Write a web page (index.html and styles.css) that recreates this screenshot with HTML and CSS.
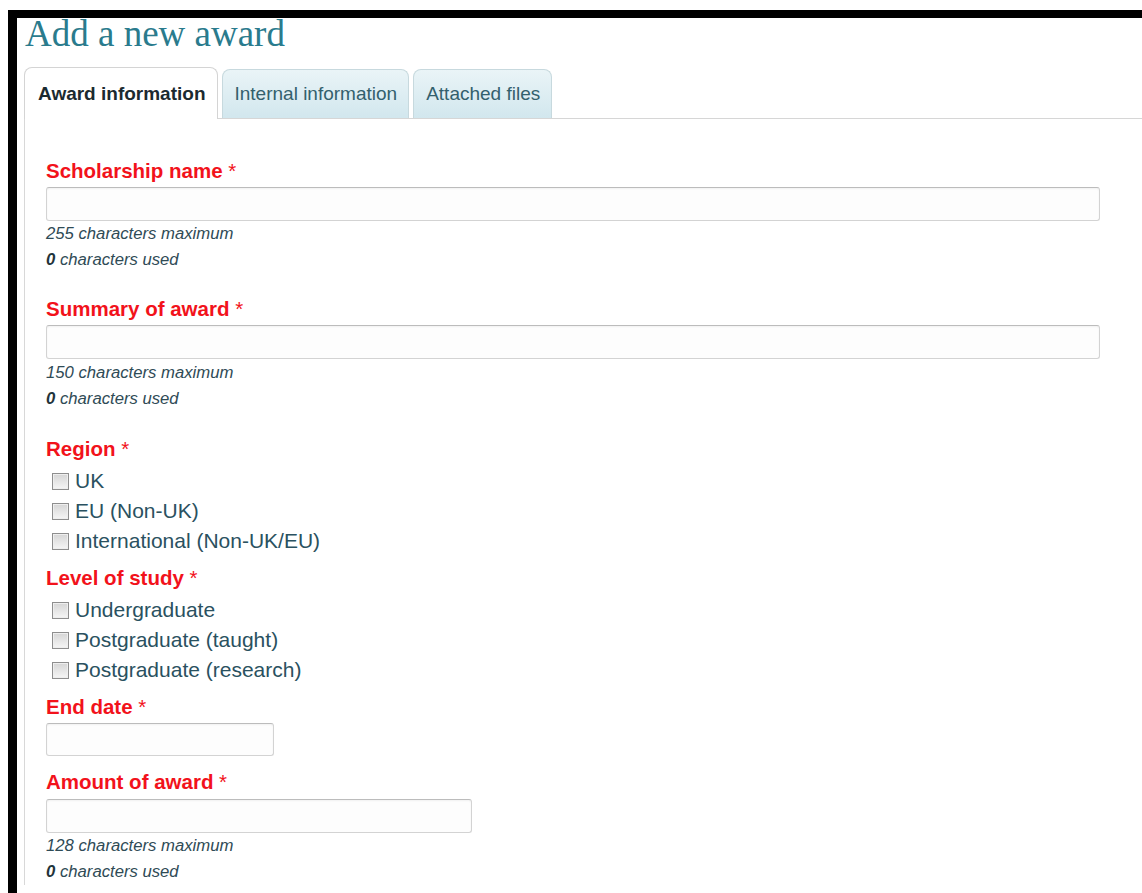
FILE: index.html
```html
<!DOCTYPE html>
<html lang="en">
<head>
<meta charset="utf-8">
<title>Add a new award</title>
<link rel="stylesheet" href="styles.css">
</head>
<body>
<div class="frame">
  <h1 class="page-title">Add a new award</h1>

  <div class="tabbar">
    <div class="tab tab--active">Award information</div>
    <div class="tab">Internal information</div>
    <div class="tab">Attached files</div>
  </div>

  <form class="panel">
    <div class="field field--counted">
      <label class="field-label" for="name">Scholarship name <span class="req">*</span></label>
      <input class="text-input text-input--wide" id="name" type="text">
      <div class="hint">255 characters maximum</div>
      <div class="hint"><b>0</b> characters used</div>
    </div>

    <div class="field field--counted field--summary">
      <label class="field-label" for="summary">Summary of award <span class="req">*</span></label>
      <input class="text-input text-input--wide" id="summary" type="text">
      <div class="hint">150 characters maximum</div>
      <div class="hint"><b>0</b> characters used</div>
    </div>

    <div class="field field--group">
      <div class="field-label field-label--group">Region <span class="req">*</span></div>
      <label class="check"><input type="checkbox"><span>UK</span></label>
      <label class="check"><input type="checkbox"><span>EU (Non-UK)</span></label>
      <label class="check"><input type="checkbox"><span>International (Non-UK/EU)</span></label>
    </div>

    <div class="field field--group">
      <div class="field-label field-label--group">Level of study <span class="req">*</span></div>
      <label class="check"><input type="checkbox"><span>Undergraduate</span></label>
      <label class="check"><input type="checkbox"><span>Postgraduate (taught)</span></label>
      <label class="check"><input type="checkbox"><span>Postgraduate (research)</span></label>
    </div>

    <div class="field field--date">
      <label class="field-label" for="end">End date <span class="req">*</span></label>
      <input class="text-input text-input--date" id="end" type="text">
    </div>

    <div class="field">
      <label class="field-label field-label--amount" for="amount">Amount of award <span class="req">*</span></label>
      <input class="text-input text-input--mid" id="amount" type="text">
      <div class="hint">128 characters maximum</div>
      <div class="hint"><b>0</b> characters used</div>
    </div>
  </form>
</div>
</body>
</html>
```

FILE: styles.css
```css
html, body {
  margin: 0;
  padding: 0;
  background: #fff;
}

body {
  font-family: "Liberation Sans", Arial, sans-serif;
  overflow: hidden;
}

/* outer dark frame */
.frame {
  margin: 10px 0 0 8px;
  border-top: 8px solid #000;
  border-left: 9px solid #000;
  padding-left: 7px;
  min-height: 900px;
}

.page-title {
  margin: 0 0 17px 1px;
  font-family: "Liberation Serif", Georgia, serif;
  font-weight: normal;
  font-size: 37px;
  line-height: 32px;
  color: #2a7b8d;
}

/* tabs */
.tabbar {
  display: flex;
  align-items: flex-end;
  gap: 4px;
  border-bottom: 1px solid #d6d6d6;
}

.tab {
  height: 48px;
  display: flex;
  align-items: center;
  padding: 0 11px 0 12px;
  font-size: 19px;
  color: #33606d;
  border: 1px solid #c7d9de;
  border-bottom: none;
  border-radius: 8px 8px 0 0;
  background: linear-gradient(#eaf4f7, #d2e7ee);
}

.tab--active {
  height: 51px;
  margin-bottom: -1px;
  padding: 0 11px 0 13px;
  font-weight: bold;
  color: #1b2a30;
  background: #fff;
  border-color: #d4d4d4;
}

/* form panel */
.panel {
  border-left: 1px solid #d8d8d8;
  padding: 40px 0 0 21px;
}

.field--counted {
  margin-bottom: 24px;
}

.field--summary {
  margin-bottom: 25px;
}

.field--summary .hint:first-of-type {
  margin-top: 1px;
}

.field--group {
  margin-bottom: 10px;
}

.field--date {
  margin-bottom: 14px;
}

.field-label {
  display: block;
  font-size: 20.5px;
  line-height: 24px;
  font-weight: bold;
  color: #f2121b;
  margin-bottom: 4px;
}

.field-label--group {
  margin-bottom: 5px;
}

.field-label--amount {
  margin-bottom: 5px;
}

.req {
  font-weight: normal;
}

.text-input {
  display: block;
  box-sizing: border-box;
  height: 34px;
  margin: 0;
  border: 1px solid #d3d3d3;
  border-top-color: #bcbcbc;
  border-radius: 3px;
  background: #fdfdfd;
  box-shadow: inset 0 1px 2px rgba(0, 0, 0, 0.05);
  font: inherit;
}

.text-input--wide {
  width: 1054px;
}

.text-input--date {
  width: 228px;
  height: 33px;
}

.text-input--mid {
  width: 426px;
}

.hint {
  font-size: 16.7px;
  line-height: 26px;
  font-style: italic;
  color: #2f4b56;
}

.hint b {
  color: #22333a;
}

/* checkbox rows */
.check {
  display: flex;
  align-items: center;
  height: 30px;
  font-size: 21px;
  color: #2a5160;
}

.check input {
  appearance: none;
  -webkit-appearance: none;
  box-sizing: border-box;
  width: 17px;
  height: 17px;
  margin: 0 6px 0 6px;
  border: 1px solid #8e8e8e;
  background: linear-gradient(#d5d5d5, #f5f5f5);
  box-shadow: inset 0 0 0 1px #eeeeee;
}
```
